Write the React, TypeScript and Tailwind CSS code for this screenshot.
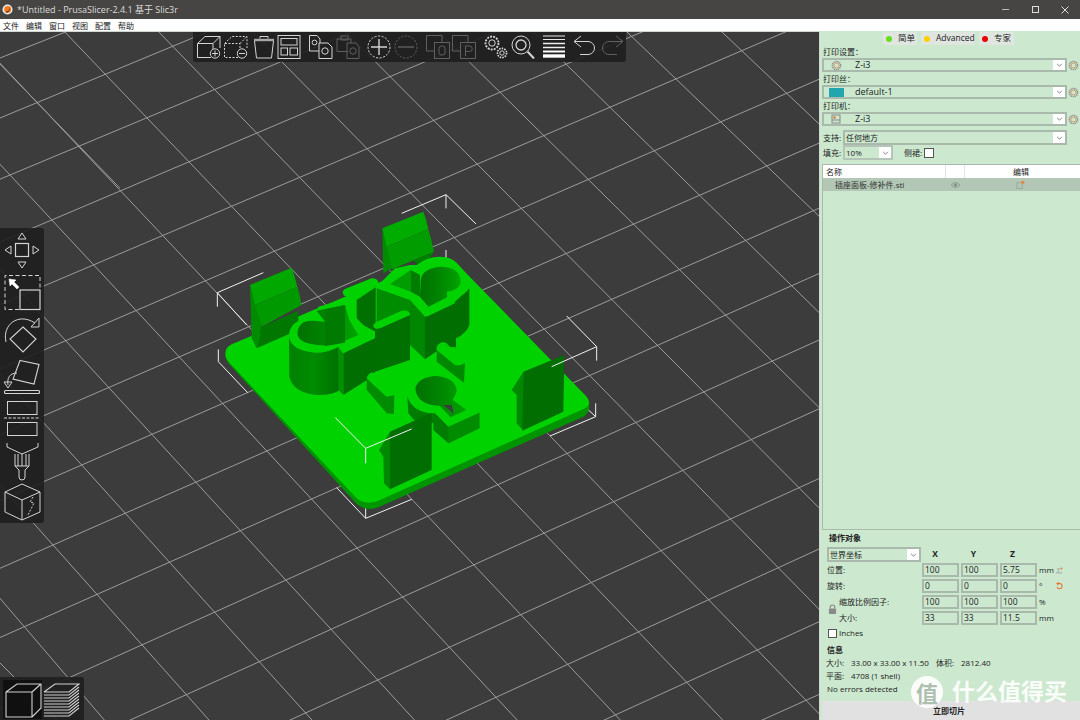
import React from "react";

const ui = { fontFamily: '"Open Sans","Noto Sans CJK SC",sans-serif' };

const rows: number[][] = [
  [0, 58, 63, 33], [0, 118, 207, 32], [10, 175, 352, 32], [51.7, 220, 323, 105], [93.3, 265, 500, 92.3],
  [65.7, 340.7, 741.7, 50.7], [0, 434.7, 786.7, 93.3], [81.7, 465, 766.7, 166], [53, 545, 746.7, 240],
  [24.3, 626.7, 791.7, 285.7], [141.7, 645, 704.3, 391.7], [186.7, 694.5, 751.7, 439.3], [377.7, 680, 799, 487.7],
  [496, 697.3, 778.3, 567.7], [686.7, 682.3, 757.3, 650], [806.7, 700, 760, 721],
];
const cols: number[][] = [
  [-4, 60, 37.3, 102.7], [105, 74, 686.7, 682.3], [215, 90, 757.3, 650], [366.7, 148.3, 778.3, 567.7], [433.3, 120, 799, 487.7],
  [500, 92.3, 772, 361], [610, 107.3, 791.7, 285.7], [676, 79, 766.7, 166], [741.7, 50.7, 786.7, 93.3],
  [37.3, 102.7, 568.3, 665], [10, 175, 496, 697.3], [65.7, 340.7, 377.7, 680], [81.7, 465, 259.3, 661.7], [53, 545, 186.7, 695], [24.3, 626.7, 68.3, 678], [0, 663, 57, 720],
];

function ext(l: number[]) {
  const [a, b, c, d] = l;
  const dx = c - a, dy = d - b, k = 2;
  return { x1: a - dx * k, y1: b - dy * k, x2: c + dx * k, y2: d + dy * k };
}

function Grid() {
  return (
    <svg className="absolute left-0 top-0" width={820} height={688} viewBox="0 32 820 688">
      {[...rows, ...cols].map((l, i) => (
        <line key={i} {...ext(l)} stroke="#9c9c9c" strokeWidth={1} />
      ))}
    </svg>
  );
}

function Model() {
  const W = "#f2f2f2";
  return (
    <svg className="absolute left-0 top-0" width={820} height={688} viewBox="0 32 820 688">
      <defs>
        <linearGradient id="hole" x1="0" x2="1" y1="0" y2="0">
          <stop offset="0" stopColor="#007000" />
          <stop offset="0.45" stopColor="#008400" />
          <stop offset="1" stopColor="#00a400" />
        </linearGradient>
        <linearGradient id="cyl" x1="0" x2="1" y1="0" y2="0">
          <stop offset="0" stopColor="#008000" />
          <stop offset="0.5" stopColor="#008c00" />
          <stop offset="1" stopColor="#006e00" />
        </linearGradient>
      </defs>
      <g transform="translate(210 190) scale(0.33333)" strokeLinejoin="round">
        <g stroke={W} strokeWidth={3} fill="none">
          <path d="M160 248 L22 308 L110 405 M22 308 V350" />
          <path d="M575 70 L708 14 L798 102 M708 14 V55 M708 180 V205" />
          <path d="M1070 378 L1160 470 V512" />
          <path d="M25 478 V515 L113 608" />
          <path d="M380 893 L467 985 V945 M467 985 L605 928" />
          <path d="M1020 738 L1157 680 V640 M1157 680 L1130 655" />
        </g>
        <path d="M46 495 Q46 510 60 525 L440 942 Q470 966 505 952 L1120 680 Q1140 670 1138 640 L1000 600 L100 470 Z" fill="#009400" />
        <path d="M46 490 Q46 472 65 463 L680 205 Q710 195 735 215 L1128 618 Q1148 640 1125 655 L510 930 Q470 948 440 925 L60 520 Q46 505 46 490 Z" fill="#00d200" />

        {/* back tab */}
        <path d="M545 238 L672 185 L655 212 L625 225 L610 212 L555 235 L525 250 Z" fill="#007c00" />
        <path d="M517 115 L530 165 L545 235 L520 250 Z" fill="#008c00" />
        <path d="M517 115 L640 65 Q650 90 655 118 L530 170 Z" fill="#00ac00" />
        <path d="M530 170 L655 118 Q665 150 672 185 L545 238 Z" fill="#009c00" />

        {/* left tab */}
        <path d="M120 285 L135 340 L155 410 L140 475 L125 445 Z" fill="#008c00" />
        <path d="M120 285 L245 233 Q255 260 262 290 L135 345 Z" fill="#00a800" />
        <path d="M135 345 L262 290 Q270 315 275 345 L155 410 Z" fill="#009a00" />
        <path d="M155 410 L265 362 L265 420 L140 475 Z" fill="#007800" />

        {/* right structure */}
        <path d="M500 295 L600 330 L600 470 L500 430 Z" fill="#008c00" />
        <path d="M600 330 L645 380 L645 508 L600 465 Z" fill="#008600" />
        <path d="M645 380 L735 335 L778 295 L778 405 Q770 430 738 445 L738 472 L700 470 L645 508 Z" fill="#006e00" />
        <path d="M500 290 L540 250 L555 235 L600 225 L620 225 Q650 200 690 200 Q730 200 755 235 Q780 265 778 290 Q770 315 730 325 L735 340 L650 380 L600 325 Z" fill="#00d200" />
        <path d="M540 282 L602 240 L602 305 Z" fill="#009c00" />
        <path d="M602 240 L630 255 L630 320 L602 305 Z" fill="#007c00" />
        <path d="M632 280 Q630 235 690 230 Q750 230 752 275 Q750 300 710 305 L712 322 L655 350 L630 320 Z" fill="url(#hole)" />

        {/* middle wall */}
        <path d="M440 330 L497 292 L497 425 L440 395 Z" fill="#007000" />
        <path d="M398 305 Q400 298 410 295 L485 265 Q505 265 505 280 L415 320 Q398 320 398 305 Z" fill="#00d200" />

        {/* left body */}
        <path d="M237 435 L238 560 Q250 610 325 615 Q370 615 390 600 L385 470 Q350 490 310 487 Q240 480 237 435 Z" fill="url(#cyl)" />
        <path d="M385 470 L400 490 L400 615 L385 600 Z" fill="#009000" />
        <path d="M400 490 L495 445 L495 555 L400 615 Z" fill="#006e00" />
        <path d="M237 435 Q240 395 290 385 L320 365 L325 350 L345 345 L405 335 L430 330 L440 385 L490 435 L400 490 L385 470 Q350 490 310 487 Q240 480 237 435 Z" fill="#00d200" />
        <path d="M262 430 Q265 390 310 392 L345 395 L320 362 L405 345 L418 390 L445 435 L390 458 Q360 470 320 465 Q265 460 262 430 Z" fill="url(#hole)" />
        <path d="M345 358 L405 345 L405 458 L345 468 Z" fill="#007a00" />

        {/* center bar */}
        <path d="M495 415 L600 375 L600 510 L495 545 Z" fill="#007000" />
        <path d="M490 405 Q495 398 505 394 L575 362 Q600 360 600 375 L510 415 Q490 420 490 405 Z" fill="#00d200" />

        {/* small bars */}
        <path d="M680 480 L680 515 L762 578 L765 520 Z" fill="#008800" />
        <path d="M680 470 Q690 452 708 458 L765 518 Q750 530 735 525 L680 480 Z" fill="#00d200" />

        {/* keyhole */}
        <path d="M592 620 L595 670 L612 690 L670 700 L670 720 L715 760 L808 715 L808 668 L700 640 Z" fill="#007c00" />
        <path d="M715 710 L808 668 L808 715 L715 760 Z" fill="#008c00" />
        <path d="M592 620 Q595 560 660 545 Q740 540 760 590 L762 625 L808 668 L715 710 L675 670 Q610 670 592 620 Z" fill="#00d200" />
        <path d="M616 595 Q625 560 680 558 Q740 565 740 605 L728 630 L770 660 L722 682 L690 648 Q620 645 616 595 Z" fill="url(#hole)" />
        <path d="M700 645 L725 645 L732 672 Z" fill="#3c3c3c" />

        {/* small bar left */}
        <path d="M470 565 L470 600 L530 670 L552 672 L553 615 L530 620 Z" fill="#008c00" />
        <path d="M470 565 Q475 545 495 548 L555 605 Q545 622 525 615 Z" fill="#00d200" />

        {/* front tab */}
        <path d="M507 780 L540 725 L540 898 L522 880 L520 800 Z" fill="#008800" />
        <path d="M540 725 L665 668 L665 840 L540 898 Z" fill="#006e00" />

        {/* right tab */}
        <path d="M905 600 L940 545 L940 722 L920 700 L920 615 Z" fill="#008800" />
        <path d="M940 545 L1063 495 L1060 665 L937 722 Z" fill="#006e00" />

        <g stroke={W} strokeWidth={3} fill="none">
          <path d="M376 683 L467 775 L605 717 M467 775 V820" />
          <path d="M1025 530 L1160 470" />
        </g>
      </g>
    </svg>
  );
}

const S = "#d4d4d4";

function TIcon({ children, dim, className }: { children: React.ReactNode; dim?: boolean; className?: string }) {
  return (
    <svg viewBox="0 0 24 24" fill="none" stroke={S} strokeWidth={1} className={`w-[24px] h-[24px] shrink-0 ${dim ? "opacity-35" : ""} ${className ?? ""}`}>
      {children}
    </svg>
  );
}

function Gears() {
  return (
    <>
      <circle cx="8" cy="8" r="6.5" strokeDasharray="2 1.1" strokeWidth="1.8" />
      <circle cx="8" cy="8" r="3.2" />
      <circle cx="18" cy="18" r="4.6" strokeDasharray="1.6 1" strokeWidth="1.6" />
      <circle cx="18" cy="18" r="2.2" />
    </>
  );
}

function TopBar() {
  return (
    <div className="absolute left-[193px] top-0 w-[433px] h-[30px] bg-[#1e1e1e]/90 rounded-b-[3px] flex items-center pl-[4px]">
      <TIcon>
        <path d="M14 22.5H.5V8.5H16V14M.5 8.5L8 1.5H23V13M16 8.5L23 1.5" />
        <circle cx="18" cy="18.5" r="4.7" />
        <path d="M18 15.5V21.5M15 18.5H21" />
      </TIcon>
      <TIcon className="ml-[3px]">
        <path d="M14 22.5H.5V8.5H16V14M.5 8.5L8 1.5H23V13M16 8.5L23 1.5" strokeDasharray="2 1.5" />
        <circle cx="18" cy="18.5" r="4.7" />
        <path d="M15 18.5H21" />
      </TIcon>
      <TIcon className="ml-[4px]">
        <path d="M2 5H22" strokeWidth="2.4" stroke="#a8a8a8" />
        <path d="M8 3.5V1.5H16V3.5" />
        <path d="M2.5 6L4.5 23H19.5L21.5 6" />
      </TIcon>
      <TIcon className="ml-[1px]">
        <rect x="1" y=".5" width="22" height="23" />
        <rect x="4" y="3.5" width="16" height="6.5" />
        <rect x="4" y="13" width="6.5" height="7" />
        <rect x="13" y="13" width="7.5" height="7" />
      </TIcon>
      <TIcon className="ml-[8px]">
        <path d="M10 16H.5V.5H8L11 4V8" />
        <circle cx="5.5" cy="7.5" r="2.4" />
        <path d="M10 8H19L23 12V23.5H10Z" />
        <circle cx="16" cy="16" r="3.2" />
      </TIcon>
      <TIcon dim className="ml-[3px]">
        <path d="M12 16.5H1V4H15V8" />
        <rect x="5" y="1" width="7" height="4" />
        <path d="M11 8H20L23 12V23.5H11Z" />
        <circle cx="17" cy="16" r="3.2" />
      </TIcon>
      <TIcon className="ml-[7px]">
        <circle cx="12" cy="12" r="11" strokeDasharray="2.2 1.4" />
        <path d="M12 4V20M4 12H20" strokeWidth="1.4" />
      </TIcon>
      <TIcon dim className="ml-[3px]">
        <circle cx="12" cy="12" r="11" strokeDasharray="2.2 1.4" />
        <path d="M4 12H20" strokeWidth="1.4" />
      </TIcon>
      <TIcon dim className="ml-[8px]">
        <path d="M9 16H.5V.5H16V7.5" />
        <rect x="8.5" y="7.5" width="15" height="16" />
        <rect x="13" y="11" width="6" height="9" rx="2.5" />
      </TIcon>
      <TIcon dim className="ml-[2px]">
        <path d="M9 16H.5V.5H16V7.5" />
        <rect x="8.5" y="7.5" width="15" height="16" />
        <path d="M13.5 21V11H17.5A2.7 2.7 0 0 1 17.5 16.5H13.5" />
      </TIcon>
      <TIcon className="ml-[8px]">
        <Gears />
      </TIcon>
      <TIcon className="ml-[3px]">
        <circle cx="10" cy="10" r="9" />
        <circle cx="10" cy="10" r="5" strokeWidth="1.3" />
        <path d="M16.5 16.5L23 23.5" strokeWidth="2" />
      </TIcon>
      <TIcon className="ml-[8px]">
        <path d="M0 1H22M0 4.5H22" stroke="#e8e8e8" />
        <path d="M0 8.5H22M0 12.5H22" stroke="#f0f0f0" strokeWidth="1.3" />
        <path d="M0 16.5H22" stroke="#fff" strokeWidth="2" />
        <path d="M0 21H22" stroke="#fff" strokeWidth="3.4" />
      </TIcon>
      <TIcon className="ml-[6px]">
        <path d="M8 1L1 6.5L8 12M1 6.5H15A6.5 6.5 0 0 1 15 19.5H7" />
      </TIcon>
      <TIcon dim className="ml-[3px]">
        <path d="M16 1L23 6.5L16 12M23 6.5H9A6.5 6.5 0 0 0 9 19.5H17" />
      </TIcon>
    </div>
  );
}

function LIcon({ y, h, children }: { y: number; h: number; children: React.ReactNode }) {
  return (
    <svg viewBox={`0 ${y} 44 ${h}`} width={44} height={h} fill="none" stroke={S} strokeWidth={1} className="shrink-0">
      {children}
    </svg>
  );
}

function LeftBar() {
  return (
    <div className="absolute left-0 top-[196px] w-[44px] h-[295px] bg-[#1e1e1e]/90 rounded-r-[3px] flex flex-col">
      <LIcon y={228} h={44}>
        <rect x="15.5" y="243.5" width="13" height="13" strokeWidth="1.2" />
        <path d="M22 233L26 239H18ZM22 268L26 262H18ZM5 250L11 246V254ZM39 250L33 246V254Z" />
      </LIcon>
      <LIcon y={272} h={44}>
        <path d="M19 309.5H5V275.5H40V289" strokeDasharray="4 2.5" />
        <rect x="20" y="290" width="20" height="19.5" strokeWidth="1.2" />
        <path d="M9 279L16 280L14 282L19 287L17 289L12 284L10 286Z" fill="#fff" stroke="#fff" strokeWidth=".5" />
      </LIcon>
      <LIcon y={316} h={44}>
        <path d="M23 327L36 339L23 352L10 339Z" strokeWidth="1.1" />
        <path d="M6 342C2 325 18 312 35 323" />
        <path d="M39 318V327H31Z" />
      </LIcon>
      <LIcon y={360} h={38}>
        <path d="M20 360.5L39 364.5L34 384L13 379Z" strokeWidth="1.1" />
        <path d="M17 373C9 373 7 379 8 385M4 382H12L8 388Z" />
        <rect x="4.5" y="390.5" width="35" height="3" rx="1" strokeWidth="1.1" />
      </LIcon>
      <LIcon y={398} h={42}>
        <rect x="7.5" y="401.5" width="29.5" height="13" />
        <path d="M4 418H39" strokeDasharray="3 1.5" />
        <rect x="7.5" y="422.5" width="29.5" height="13" />
      </LIcon>
      <LIcon y={440} h={42}>
        <path d="M7 443V447L22 454L38 447V443" />
        <path d="M15 454V466H29V454M18 454V466M22 454V466M26 454V466" />
        <path d="M15 466L19 470V477A3 3 0 0 0 25 477V470L29 466" />
      </LIcon>
      <LIcon y={482} h={41}>
        <path d="M22 484L40 492V512L22 520L5 512V492ZM5 492L22 500L40 492M22 500V520" />
        <path d="M33 497L30 502L34 503L28 515" strokeDasharray="2 1.5" />
      </LIcon>
    </div>
  );
}

function BottomBar() {
  return (
    <div className="absolute left-0 bottom-0 w-[84px] h-[43px] bg-[#1e1e1e]/90 rounded-tr-[3px] flex items-end pl-[3px] pb-[1px]">
      <div className="w-[39px] h-[39px] bg-[#0e0e0e]/90 flex items-center justify-center">
        <svg viewBox="0 0 38 36" width={38} height={36} fill="none" stroke="#d0d0d0" strokeWidth={1.1}>
          <path d="M2 10H28V35H2ZM2 10L13 2H37V26L28 35M28 10L37 2" />
        </svg>
      </div>
      <svg viewBox="0 0 38 36" width={38} height={36} fill="none" stroke="#d0d0d0" strokeWidth={1.1} className="mb-[1px]">
        <path d="M2 10L13 2H37L27 10H2" />
        <path d="M2 13H27L37 5M2 16H27L37 8M2 19H27L37 11M2 22H27L37 14M2 25H27L37 17M2 28H27L37 20M2 31H27L37 23M2 34H27L37 26" />
      </svg>
    </div>
  );
}

function PanelGear() {
  return (
    <svg viewBox="0 0 12 12" width={11} height={11} className="shrink-0" fill="none">
      <circle cx="6" cy="6" r="4.4" stroke="#8e8e8e" strokeWidth="1.8" strokeDasharray="1.4 .7" />
      <circle cx="6" cy="6" r="2.6" stroke="#d99a5b" strokeWidth="1" />
    </svg>
  );
}

function Chevron() {
  return (
    <div className="w-[12px] self-stretch bg-white flex items-center justify-center shrink-0">
      <svg viewBox="0 0 8 5" width={7} height={4} fill="none" stroke="#666" strokeWidth="1">
        <path d="M1 1L4 4L7 1" />
      </svg>
    </div>
  );
}

function Preset({ label, text, icon }: { label: string; text: string; icon: React.ReactNode }) {
  return (
    <div className="h-[27px] flex flex-col">
      <div className="h-[12px] leading-[12px] pl-[3px]">{label}</div>
      <div className="flex items-center h-[14px]">
        <div className="ml-[2px] w-[245px] h-[14px] border-2 border-[#a9b9ac] flex items-center">
          <div className="w-[24px] flex justify-center shrink-0">{icon}</div>
          <span className="pl-[7px] flex-1 text-[9px]">{text}</span>
          <Chevron />
        </div>
        <div className="ml-[1px]"><PanelGear /></div>
      </div>
    </div>
  );
}

function Mode({ color, text, w }: { color: string; text: string; w: string }) {
  return (
    <div className={`h-[13px] bg-[#dfe6e0] flex items-center pl-[3px] gap-[6px] text-[8.5px] ${w}`}>
      <span className={`w-[6px] h-[6px] rounded-full shrink-0 ${color}`} />
      <span>{text}</span>
    </div>
  );
}

function Num({ v }: { v: string }) {
  return <div className="w-[37px] h-[14px] border-2 border-[#a9b9ac] leading-[10px] pl-[1px] text-[8.5px]">{v}</div>;
}

function XYZ({ label, a, b, c, unit, icon, indent }: { label: string; a: string; b: string; c: string; unit: string; icon?: React.ReactNode; indent?: boolean }) {
  return (
    <div className="h-[16px] flex items-center">
      <div className={`w-[95px] ${indent ? "pl-[12px]" : ""}`}>{label}</div>
      <div className="flex gap-[2px]"><Num v={a} /><Num v={b} /><Num v={c} /></div>
      <div className="w-[18px] pl-[2px]">{unit}</div>
      <div className="w-[8px] flex justify-center">{icon}</div>
    </div>
  );
}

function Panel() {
  return (
    <div className="w-[260px] shrink-0 h-full bg-[#cce8cf] text-[#222] text-[8px] flex flex-col relative overflow-hidden" style={ui}>
      <div className="h-[15px] pt-[1px] flex pl-[63px] gap-[4px]">
        <Mode color="bg-[#66e01a]" text="简单" w="w-[34px]" />
        <Mode color="bg-[#ffcf00]" text="Advanced" w="w-[54px]" />
        <Mode color="bg-[#e80000]" text="专家" w="w-[35px]" />
      </div>
      <Preset label="打印设置：" text="Z-i3" icon={<PanelGear />} />
      <Preset label="打印丝：" text="default-1" icon={<span className="block w-[15px] h-[9px] bg-[#21a6ad]" />} />
      <Preset label="打印机：" text="Z-i3" icon={
        <svg viewBox="0 0 10 10" width={10} height={10} fill="none"><rect x="1" y="1" width="8" height="8" stroke="#888" /><path d="M1 6H9" stroke="#888" /><circle cx="3.5" cy="3.5" r="1.2" fill="#e8702a" /></svg>
      } />
      <div className="h-[15px] mt-[3px] flex items-center pl-[3px]">
        <span className="w-[20px]">支持:</span>
        <div className="w-[224px] h-[15px] border-2 border-[#a9b9ac] flex items-center">
          <span className="pl-[1px] flex-1">任何地方</span>
          <Chevron />
        </div>
      </div>
      <div className="h-[15px] flex items-center pl-[3px]">
        <span className="w-[20px]">填充:</span>
        <div className="w-[50px] h-[15px] border-2 border-[#b5c4b8] flex items-center">
          <span className="pl-[1px] flex-1">10%</span>
          <Chevron />
        </div>
        <span className="ml-[11px]">侧裙:</span>
        <span className="ml-[2px] w-[10px] h-[10px] bg-white border border-[#555]" />
      </div>
      <div className="ml-[2px] mt-[4px] h-[366px] border border-[#a9b9ac] border-r-0 flex flex-col">
        <div className="h-[13px] bg-white flex items-center shrink-0">
          <span className="w-[123px] pl-[3px] border-r border-[#e3e3e3] h-full leading-[13px]">名称</span>
          <span className="w-[19px] border-r border-[#e3e3e3] h-full" />
          <span className="flex-1 text-center pr-[3px]">编辑</span>
        </div>
        <div className="h-[13px] bg-[#b2c7b5] flex items-center shrink-0 text-[#333]">
          <span className="w-[123px] pl-[12px]">插座面板-修补件.stl</span>
          <span className="w-[19px] flex justify-center">
            <svg viewBox="0 0 12 8" width={9} height={6} fill="none" stroke="#7d8a7f"><path d="M.5 4C3 0 9 0 11.5 4C9 8 3 8 .5 4Z" /><circle cx="6" cy="4" r="1.5" fill="#7d8a7f" /></svg>
          </span>
          <span className="flex-1 flex justify-center pr-[5px]">
            <svg viewBox="0 0 10 10" width={9} height={9} fill="none"><rect x="1" y="3" width="6" height="6.5" stroke="#9aa89c" /><circle cx="7.5" cy="2.5" r="1.8" fill="#e8833a" /></svg>
          </span>
        </div>
      </div>
      <div className="h-[13px] mt-[1px] pl-[9px] font-bold leading-[13px]">操作对象</div>
      <div className="h-[15px] mt-[3px] flex items-center pl-[7px]">
        <div className="w-[94px] h-[15px] border-2 border-[#a9b9ac] flex items-center shrink-0">
          <span className="pl-[1px] flex-1">世界坐标</span>
          <Chevron />
        </div>
        <div className="flex font-bold text-center text-[8.5px] -ml-[6px]">
          <span className="w-[39px] pl-[1px]">X</span>
          <span className="w-[39px]">Y</span>
          <span className="w-[39px]">Z</span>
        </div>
      </div>
      <div className="pl-[7px] relative">
        <XYZ label="位置:" a="100" b="100" c="5.75" unit="mm" icon={
          <svg viewBox="0 0 10 10" width={9} height={9} fill="none"><path d="M1 8H9M4 7V3M6 3H3" stroke="#9a9a9a" /><circle cx="8" cy="2.5" r="1.4" fill="#e8833a" /></svg>
        } />
        <XYZ label="旋转:" a="0" b="0" c="0" unit="°" icon={
          <svg viewBox="0 0 10 10" width={10} height={10} fill="none" stroke="#e8702a" strokeWidth="1.3"><path d="M3 2H6A3.2 3.2 0 1 1 2.5 6" /><path d="M4.5 .5L2.5 2L4.5 3.8" /></svg>
        } />
        <XYZ indent label="缩放比例因子:" a="100" b="100" c="100" unit="%" />
        <XYZ indent label="大小:" a="33" b="33" c="11.5" unit="mm" />
        <svg viewBox="0 0 10 12" width={9} height={11} className="absolute left-[8px] top-[42px]">
          <path d="M2.5 5V3.5A2.5 2.5 0 0 1 7.5 3.5V5" fill="none" stroke="#8a8a8a" strokeWidth="1.3" />
          <rect x="1" y="5" width="8" height="6" rx="1" fill="#8a8a8a" />
        </svg>
      </div>
      <div className="h-[14px] flex items-center pl-[8px] gap-[2px]">
        <span className="w-[9px] h-[9px] bg-white border border-[#555]" />
        <span>Inches</span>
      </div>
      <div className="h-[13px] mt-[3px] pl-[7px] font-bold leading-[13px]">信息</div>
      <div className="h-[13px] pl-[6px] flex leading-[13px]">
        <span className="w-[25px]">大小:</span><span className="w-[85px]">33.00 x 33.00 x 11.50</span><span className="w-[25px]">体积:</span><span>2812.40</span>
      </div>
      <div className="h-[13px] pl-[6px] flex leading-[13px]">
        <span className="w-[25px]">平面:</span><span>4708 (1 shell)</span>
      </div>
      <div className="h-[13px] pl-[7px] leading-[13px]">No errors detected</div>
      <div className="mt-auto ml-[2px] h-[19px] bg-[#e1e1e1] flex items-center justify-center font-bold pr-[4px]">立即切片</div>
      <div className="absolute left-[91px] top-[645px] w-[32px] h-[32px] rounded-full bg-white/90 flex items-center justify-center text-[#aebfb0] text-[22px] leading-[30px] font-bold" style={{ fontFamily: '"Noto Sans CJK SC",sans-serif' }}>值</div>
      <div className="absolute left-[132px] top-[649px] text-white/90 text-[23px] leading-[20px] font-bold whitespace-nowrap" style={{ fontFamily: '"Noto Sans CJK SC",sans-serif' }}>什么值得买</div>
    </div>
  );
}

function WinBtn({ children }: { children: React.ReactNode }) {
  return <div className="w-[30px] flex items-center justify-center">{children}</div>;
}

export default function App() {
  return (
    <div className="w-[1080px] h-[720px] flex flex-col overflow-hidden bg-[#3c3c3c]" style={ui}>
      <div className="h-[19px] bg-[#474543] flex items-center shrink-0 text-[#dcdcdc] text-[9px]">
        <svg viewBox="0 0 12 12" width={11} height={11} className="ml-[2px] shrink-0">
          <circle cx="6" cy="6" r="5.5" fill="#eee" />
          <circle cx="6.2" cy="6" r="3.8" fill="#f47a20" />
          <path d="M8 2.6C8.5 6 7 8.5 3.5 8.8C6 10.5 9.5 7 8 2.6Z" fill="#222" />
        </svg>
        <span className="ml-[4px]">*Untitled - PrusaSlicer-2.4.1 基于 Slic3r</span>
        <div className="ml-auto h-full flex">
          <WinBtn><span className="block w-[7px] h-[1px] bg-[#bbb]" /></WinBtn>
          <WinBtn><span className="block w-[7px] h-[7px] border border-[#ddd]" /></WinBtn>
          <WinBtn>
            <svg viewBox="0 0 8 8" width={8} height={8} stroke="#ddd"><path d="M.5 .5L7.5 7.5M7.5 .5L.5 7.5" /></svg>
          </WinBtn>
        </div>
      </div>
      <div className="h-[12px] bg-white flex items-center gap-[7px] pl-[3px] pt-[1px] text-[8px] text-[#222] shrink-0">
        <span>文件</span><span>编辑</span><span>窗口</span><span>视图</span><span>配置</span><span>帮助</span>
      </div>
      <div className="flex-1 flex min-h-0">
        <div className="relative w-[820px] shrink-0 h-full bg-[#3c3c3c] border-t border-r border-[#cfd8d0] overflow-hidden">
          <Grid />
          <Model />
          <TopBar />
          <LeftBar />
          <BottomBar />
        </div>
        <Panel />
      </div>
    </div>
  );
}
